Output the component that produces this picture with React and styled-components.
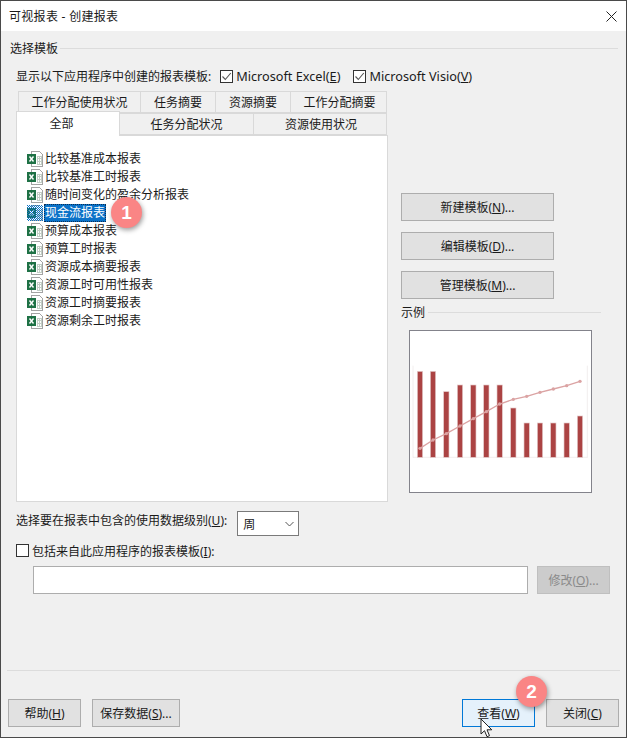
import styled, { createGlobalStyle } from 'styled-components';

const GlobalStyle = createGlobalStyle`
    * { box-sizing: border-box; }
    html, body { margin: 0; padding: 0; background: #fff; }
    body {
        font-family: "Noto Sans", "Noto Sans CJK SC", sans-serif;
        font-size: 12px;
        color: #1a1a1a;
    }
    u { text-underline-offset: 1px; }
`;

const Window = styled.div`
    width: 627px;
    height: 738px;
    display: flex;
    flex-direction: column;
    background: #f0f0f0;
    border: 1px solid #4a4a4a;
    overflow: hidden;
`;

const TitleBar = styled.div`
    height: 30px;
    flex: none;
    display: flex;
    align-items: center;
    justify-content: space-between;
    padding: 0 9px 0 8px;
    background: #fff;
    font-size: 12px;
    letter-spacing: 0.3px;
`;

const Body = styled.div`
    flex: 1;
    display: flex;
    flex-direction: column;
    padding: 9px 6px 0 9px;
`;

const GroupHeader = styled.div`
    display: flex;
    align-items: center;
    gap: ${({ $gap }) => $gap || 2}px;
    height: 16px;
    margin-top: ${({ $top }) => $top || 0}px;
    padding-right: ${({ $inset }) => $inset || 2}px;

    &::after {
        content: '';
        flex: 1;
        height: 1px;
        background: #dcdcdc;
    }
`;

const TemplateRow = styled.div`
    display: flex;
    align-items: center;
    height: 16px;
    margin: 12px 0 0 6px;
`;

const CheckLabel = styled.label`
    display: flex;
    align-items: center;
    gap: 3px;
    margin-left: ${({ $left }) => $left || 0}px;
    font-size: 12.7px;
    white-space: nowrap;
`;

const CheckBox = styled.span`
    width: 13px;
    height: 13px;
    flex: none;
    display: flex;
    align-items: center;
    justify-content: center;
    background: #fff;
    border: 1px solid #333;
`;

const Main = styled.div`
    display: flex;
    gap: 13px;
    margin: 7px 0 0 6px;
`;

const LeftColumn = styled.div`
    width: 372px;
    flex: none;
`;

const TabRow = styled.div`
    display: flex;
    height: 22px;
    align-items: flex-end;
    margin-left: ${({ $indent }) => $indent || 0}px;
`;

const Tab = styled.div`
    width: ${({ $width }) => $width}px;
    height: ${({ $active }) => ($active ? 25 : 22)}px;
    margin-bottom: ${({ $active }) => ($active ? -1 : 0)}px;
    display: flex;
    align-items: ${({ $active }) => ($active ? 'flex-start' : 'center')};
    justify-content: center;
    padding: ${({ $active }) => ($active ? 2 : 0)}px ${({ $right }) => $right || 0}px 0 ${({ $nudge }) => $nudge || 0}px;
    margin-left: -1px;
    background: ${({ $active }) => ($active ? '#fff' : '#f0f0f0')};
    border: 1px solid #d9d9d9;
    border-bottom: ${({ $active }) => ($active ? 'none' : '1px solid #d9d9d9')};

    &:first-child { margin-left: 0; }
`;

const ListPane = styled.div`
    height: 367px;
    padding: 14px 0 0 10px;
    background: #fff;
    border: 1px solid #d9d9d9;
`;

const ListRow = styled.div`
    position: relative;
    display: flex;
    align-items: center;
    gap: 1px;
    height: 18px;
`;

const ListText = styled.span`
    height: 18px;
    line-height: 17px;
    padding: 0 1px;
    color: ${({ $selected }) => ($selected ? '#fff' : '#1a1a1a')};
    background: ${({ $selected }) => ($selected ? '#0a72c8' : 'transparent')};
    outline: ${({ $selected }) => ($selected ? '1px dotted #0b2f55' : 'none')};
    outline-offset: -1px;
`;

const Badge = styled.span`
    position: absolute;
    left: ${({ $left }) => $left}px;
    top: ${({ $top }) => $top}px;
    width: 31px;
    height: 31px;
    display: flex;
    align-items: center;
    justify-content: center;
    border-radius: 50%;
    background: #fa8585;
    color: #fff;
    font-family: "Liberation Sans", sans-serif;
    font-size: 19px;
    font-weight: 700;
    box-shadow: 1px 2px 5px rgba(0, 0, 0, 0.4);
    z-index: 3;
`;

const RightColumn = styled.div`
    width: 201px;
    flex: none;
    display: flex;
    flex-direction: column;
    padding-top: 102px;
`;

const Button = styled.div`
    position: relative;
    width: ${({ $width }) => $width}px;
    height: 28px;
    flex: none;
    display: flex;
    align-items: center;
    justify-content: center;
    margin-bottom: ${({ $below }) => $below || 0}px;
    color: ${({ $disabled }) => ($disabled ? '#8a8a8a' : '#1a1a1a')};
    background: ${({ $primary, $disabled }) => ($primary ? '#e5f1fb' : $disabled ? '#cccccc' : '#e1e1e1')};
    border: 1px solid ${({ $primary, $disabled }) => ($primary ? '#0078d7' : $disabled ? '#bfbfbf' : '#adadad')};
`;

const PreviewBox = styled.div`
    width: 183px;
    height: 163px;
    margin: 10px 0 0 8px;
    background: #fff;
    border: 1px solid #83838b;
`;

const LevelRow = styled.div`
    display: flex;
    align-items: center;
    gap: 10px;
    height: 25px;
    margin: 9px 0 0 6px;
`;

const LevelLabel = styled.span`
    padding-bottom: 7px;
`;

const Select = styled.div`
    width: 62px;
    height: 25px;
    display: flex;
    align-items: center;
    justify-content: space-between;
    padding: 0 4px 0 5px;
    background: #fff;
    border: 1px solid #7a7a7a;
`;

const IncludeRow = styled.div`
    display: flex;
    align-items: center;
    gap: 3px;
    height: 13px;
    margin: 8px 0 0 6px;
`;

const PathRow = styled.div`
    display: flex;
    gap: 9px;
    margin: 9px 0 0 23px;
`;

const PathInput = styled.div`
    width: 495px;
    height: 28px;
    background: #fff;
    border: 1px solid #adadad;
`;

const Divider = styled.div`
    height: 1px;
    margin: 76px 0 0 -3px;
    width: 613px;
    background: #dcdcdc;
`;

const Footer = styled.div`
    display: flex;
    align-items: center;
    margin: 28px 0 0 -2px;
`;

const FooterGroup = styled.div`
    display: flex;
    gap: 11px;
    margin-left: ${({ $left }) => $left || 0}px;
`;

const ExcelIcon = ({ selected }) => (
    <svg width="16" height="16" viewBox="0 0 16 16" shapeRendering="crispEdges">
        <defs>
            <pattern id="dither" width="2" height="2" patternUnits="userSpaceOnUse">
                <rect width="1" height="1" fill="#0a72c8" />
                <rect x="1" y="1" width="1" height="1" fill="#0a72c8" />
            </pattern>
        </defs>
        <path d="M4.500 .5h8l3 3v12h-11z" fill="#fff" stroke="#a3a3a3" />
        <path d="M10 5h4v8h-4zM10 7.500h4M10 10.500h4M12 5v8" fill="none" stroke="#c3cfc6" />
        <rect x="0" y="3" width="9" height="10" fill="#1e7145" />
        <path d="M2.500 5.500l4 5M6.500 5.500l-4 5" stroke="#fff" strokeWidth="1.400" shapeRendering="auto" />
        {selected && <rect width="16" height="16" fill="url(#dither)" />}
    </svg>
);

const Check = () => (
    <svg width="11" height="11" viewBox="0 0 11 11">
        <path d="M1.500 5.500l2.800 3L9.800 2" fill="none" stroke="#555" strokeWidth="1.100" />
    </svg>
);

const Close = () => (
    <svg width="11" height="11" viewBox="0 0 11 11">
        <path d="M.5 .5l10 10M10.500 .5l-10 10" stroke="#222" strokeWidth="1" />
    </svg>
);

const Chevron = () => (
    <svg width="9" height="6" viewBox="0 0 9 6">
        <path d="M.5 1l4 4 4-4" fill="none" stroke="#555" strokeWidth="1" />
    </svg>
);

const CursorSvg = styled.svg`
    position: absolute;
    left: 17px;
    top: 18px;
    z-index: 4;
`;

const Cursor = () => (
    <CursorSvg width="13" height="20" viewBox="0 0 13 20">
        <path
            d="M1 1v15l3.500-3.300 2.500 6 2.500-1-2.500-5.900h4.800z"
            fill="#fff"
            stroke="#222"
            strokeWidth="1"
            strokeLinejoin="round"
        />
    </CursorSvg>
);

const barX = [91, 130, 170, 211, 251, 290, 330, 371, 411, 451, 491, 531, 571];
const barTop = [575, 575, 636, 616, 616, 616, 616, 685, 730, 730, 730, 730, 709];
const lineY = [806, 781, 762, 739, 717, 696, 673, 659, 650, 638, 628, 618, 605];

const SampleChart = () => (
    <svg width="181" height="161" viewBox="61 454 543 483">
        <path d="M70 558v276M593 558v276M70 833h523" stroke="#ece6e6" strokeWidth="2" fill="none" />
        {barX.map((x, i) => (
            <rect key={x} x={x - 8} y={barTop[i]} width="16" height={833 - barTop[i]} fill="#ab4343" stroke="#e3c9c9" strokeWidth="2" />
        ))}
        <polyline
            points={barX.map((x, i) => `${x},${lineY[i]}`).join(' ')}
            fill="none"
            stroke="#dba3a3"
            strokeWidth="4"
        />
        {barX.map((x, i) => (
            <circle key={x} cx={x} cy={lineY[i]} r="5" fill="#dba3a3" />
        ))}
    </svg>
);

const reports = [
    '比较基准成本报表',
    '比较基准工时报表',
    '随时间变化的盈余分析报表',
    '现金流报表',
    '预算成本报表',
    '预算工时报表',
    '资源成本摘要报表',
    '资源工时可用性报表',
    '资源工时摘要报表',
    '资源剩余工时报表',
];

export default function App() {
    return (
        <Window>
            <GlobalStyle />
            <TitleBar>
                <span>可视报表 - 创建报表</span>
                <Close />
            </TitleBar>
            <Body>
                <GroupHeader $inset={2}>选择模板</GroupHeader>
                <TemplateRow>
                    显示以下应用程序中创建的报表模板:
                    <CheckLabel $left={9}>
                        <CheckBox><Check /></CheckBox>
                        <span>Microsoft Excel(<u>E</u>)</span>
                    </CheckLabel>
                    <CheckLabel $left={13}>
                        <CheckBox><Check /></CheckBox>
                        <span>Microsoft Visio(<u>V</u>)</span>
                    </CheckLabel>
                </TemplateRow>
                <Main>
                    <LeftColumn>
                        <TabRow $indent={2}>
                            <Tab $width={123}>工作分配使用状况</Tab>
                            <Tab $width={76}>任务摘要</Tab>
                            <Tab $width={76}>资源摘要</Tab>
                            <Tab $width={97} $nudge={2}>工作分配摘要</Tab>
                        </TabRow>
                        <TabRow>
                            <Tab $width={104} $active $right={13}>全部</Tab>
                            <Tab $width={135}>任务分配状况</Tab>
                            <Tab $width={134} $nudge={2}>资源使用状况</Tab>
                        </TabRow>
                        <ListPane>
                            {reports.map((name) => {
                                const selected = name === '现金流报表';
                                return (
                                    <ListRow key={name}>
                                        <ExcelIcon selected={selected} />
                                        <ListText $selected={selected}>{name}</ListText>
                                        {selected && <Badge $left={84} $top={-7}>1</Badge>}
                                    </ListRow>
                                );
                            })}
                        </ListPane>
                    </LeftColumn>
                    <RightColumn>
                        <Button $width={153} $below={11}>新建模板(<u>N</u>)...</Button>
                        <Button $width={153} $below={11}>编辑模板(<u>D</u>)...</Button>
                        <Button $width={153}>管理模板(<u>M</u>)...</Button>
                        <GroupHeader $gap={3} $inset={1} $top={5}>示例</GroupHeader>
                        <PreviewBox><SampleChart /></PreviewBox>
                    </RightColumn>
                </Main>
                <LevelRow>
                    <LevelLabel>选择要在报表中包含的使用数据级别(<u>U</u>):</LevelLabel>
                    <Select>周<Chevron /></Select>
                </LevelRow>
                <IncludeRow>
                    <CheckBox />
                    <span>包括来自此应用程序的报表模板(<u>I</u>):</span>
                </IncludeRow>
                <PathRow>
                    <PathInput />
                    <Button $width={73} $disabled>修改(<u>O</u>)...</Button>
                </PathRow>
                <Divider />
                <Footer>
                    <FooterGroup>
                        <Button $width={73}>帮助(<u>H</u>)</Button>
                        <Button $width={88}>保存数据(<u>S</u>)...</Button>
                    </FooterGroup>
                    <FooterGroup $left={282}>
                        <Button $width={73} $primary>
                            查看(<u>W</u>)
                            <Badge $left={53} $top={-24}>2</Badge>
                            <Cursor />
                        </Button>
                        <Button $width={73}>关闭(<u>C</u>)</Button>
                    </FooterGroup>
                </Footer>
            </Body>
        </Window>
    );
}
